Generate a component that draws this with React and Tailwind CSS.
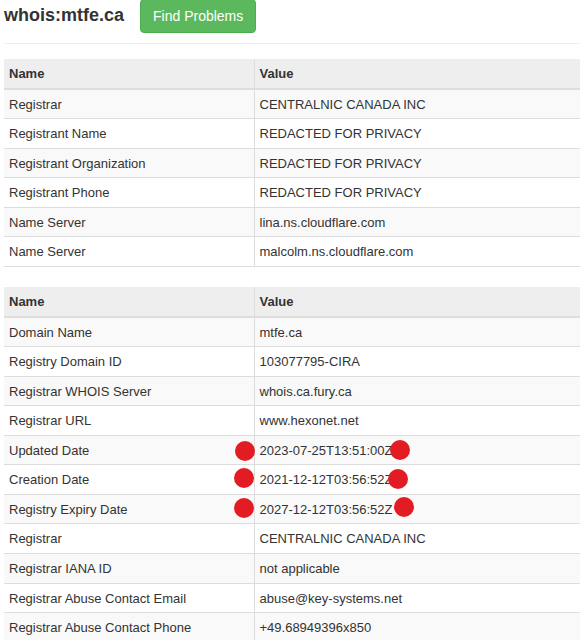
const firstTable = [
  ['Registrar', 'CENTRALNIC CANADA INC'],
  ['Registrant Name', 'REDACTED FOR PRIVACY'],
  ['Registrant Organization', 'REDACTED FOR PRIVACY'],
  ['Registrant Phone', 'REDACTED FOR PRIVACY'],
  ['Name Server', 'lina.ns.cloudflare.com'],
  ['Name Server', 'malcolm.ns.cloudflare.com'],
];

// dots: offsets of the red markers, relative to the value cell
const secondTable = [
  ['Domain Name', 'mtfe.ca'],
  ['Registry Domain ID', '103077795-CIRA'],
  ['Registrar WHOIS Server', 'whois.ca.fury.ca'],
  ['Registrar URL', 'www.hexonet.net'],
  ['Updated Date', '2023-07-25T13:51:00Z', { left: [230, 1], right: [135, 0] }],
  ['Creation Date', '2021-12-12T03:56:52Z', { left: [229, -1], right: [133, 0] }],
  ['Registry Expiry Date', '2027-12-12T03:56:52Z', { left: [229, -1], right: [139, -2] }],
  ['Registrar', 'CENTRALNIC CANADA INC'],
  ['Registrar IANA ID', 'not applicable'],
  ['Registrar Abuse Contact Email', 'abuse@key-systems.net'],
  ['Registrar Abuse Contact Phone', '+49.68949396x850'],
];

function Dot({ x, y }) {
  return (
    <span
      className="absolute h-5 w-5 rounded-full bg-[#e31c24]"
      style={{ left: x, top: y }}
    />
  );
}

function WhoisTable({ rows }) {
  return (
    <table className="mb-5 w-full border-collapse text-[13px] leading-[1.42857]">
      <thead>
        <tr className="bg-[#eeeeee]">
          <th className="w-[250px] border-b-2 border-[#dddddd] px-[5px] pt-[6px] pb-[4px] text-left font-bold">Name</th>
          <th className="border-b-2 border-l border-[#dddddd] px-[5px] pt-[6px] pb-[4px] text-left font-bold">Value</th>
        </tr>
      </thead>
      <tbody>
        {rows.map(([name, value, dots], index) => (
          <tr key={index} className={index % 2 === 0 ? 'bg-[#f9f9f9]' : 'bg-white'}>
            <td className="border-y border-[#dddddd] px-[5px] pt-[6px] pb-[4px]">{name}</td>
            <td className="relative border-y border-l border-[#dddddd] px-[5px] pt-[6px] pb-[4px]">
              {value}
              {dots ? (
                <>
                  <Dot x={dots.left[0] - 250} y={4 + dots.left[1]} />
                  <Dot x={dots.right[0]} y={4 + dots.right[1]} />
                </>
              ) : null}
            </td>
          </tr>
        ))}
      </tbody>
    </table>
  );
}

export default function App() {
  return (
    <div className="min-h-screen bg-white pl-1 text-[#333333] font-['Liberation_Sans',Arial,sans-serif]">
      <div className="flex items-start">
        <h1 className="mt-[5px] text-[18px] font-bold leading-[20px]">whois:mtfe.ca</h1>
        <button
          type="button"
          className="-mt-px ml-4 h-[34px] rounded border border-[#4cae4c] bg-[#5cb85c] px-3 text-[14px] text-white"
        >
          Find Problems
        </button>
      </div>
      <div className="mt-[10px] border-t border-[#eeeeee]" />
      <div className="mt-[15px]">
        <WhoisTable rows={firstTable} />
        <WhoisTable rows={secondTable} />
      </div>
    </div>
  );
}
